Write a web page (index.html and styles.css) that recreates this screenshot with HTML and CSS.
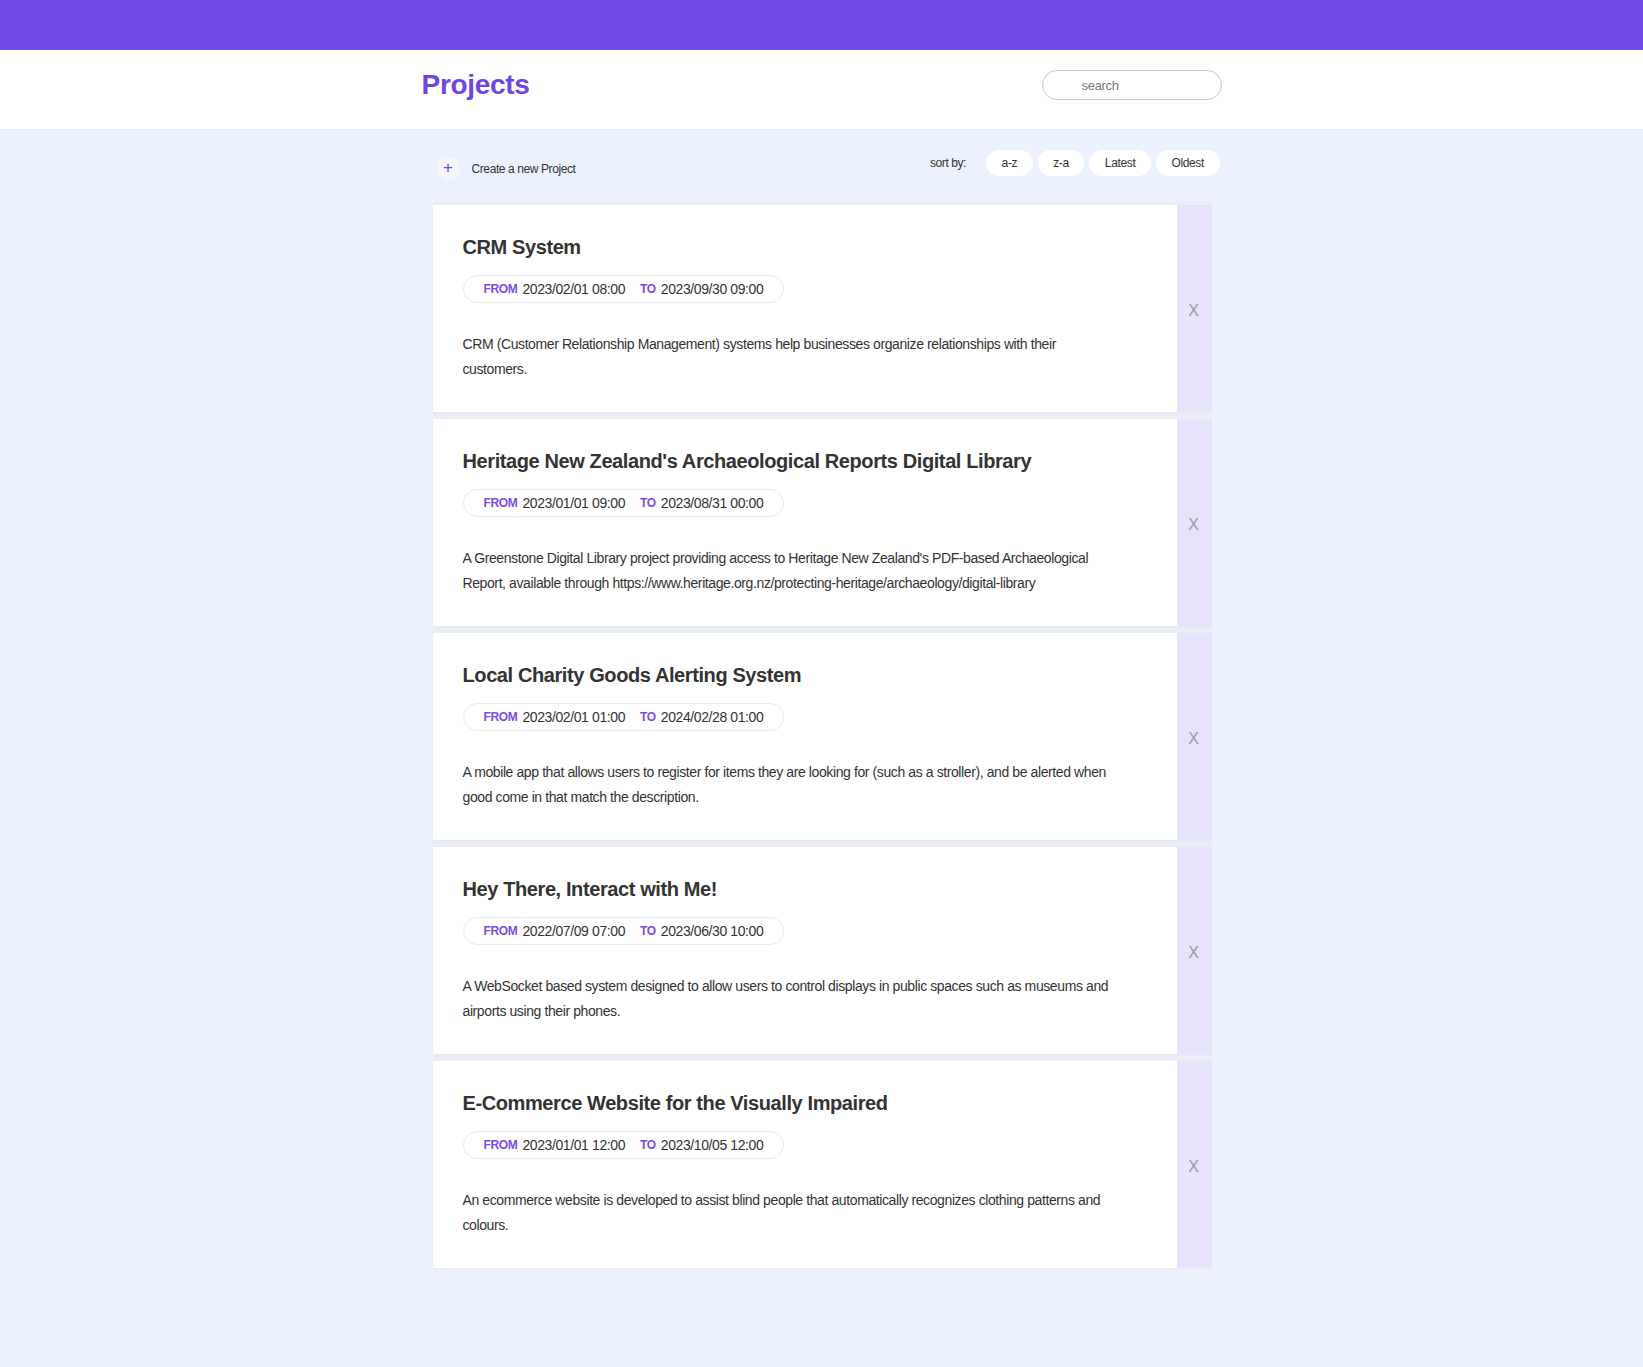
FILE: index.html
```html
<!DOCTYPE html>
<html lang="en">
<head>
<meta charset="utf-8">
<title>Projects</title>
<link rel="stylesheet" href="styles.css">
</head>
<body>
<div class="topbar"></div>
<header class="header">
  <div class="container header-inner">
    <h1 class="title">Projects</h1>
    <input class="search" type="text" placeholder="search">
  </div>
</header>
<main class="container">
  <div class="toolbar">
    <button class="create"><span class="plus">+</span><span class="create-text">Create a new Project</span></button>
    <div class="sort">
      <span class="sort-label">sort by:</span>
      <button class="sort-btn">a-z</button>
      <button class="sort-btn">z-a</button>
      <button class="sort-btn">Latest</button>
      <button class="sort-btn">Oldest</button>
    </div>
  </div>
  <ul class="list">
    <li class="card">
      <div class="card-body">
        <h2 class="card-title">CRM System</h2>
        <div class="dates"><span class="lbl">FROM</span><span class="date">2023/02/01 08:00</span><span class="lbl">TO</span><span class="date">2023/09/30 09:00</span></div>
        <p class="desc">CRM (Customer Relationship Management) systems help businesses organize relationships with their customers.</p>
      </div>
      <button class="remove">X</button>
    </li>
    <li class="card">
      <div class="card-body">
        <h2 class="card-title">Heritage New Zealand's Archaeological Reports Digital Library</h2>
        <div class="dates"><span class="lbl">FROM</span><span class="date">2023/01/01 09:00</span><span class="lbl">TO</span><span class="date">2023/08/31 00:00</span></div>
        <p class="desc">A Greenstone Digital Library project providing access to Heritage New Zealand's PDF-based Archaeological Report, available through https://www.heritage.org.nz/protecting-heritage/archaeology/digital-library</p>
      </div>
      <button class="remove">X</button>
    </li>
    <li class="card">
      <div class="card-body">
        <h2 class="card-title">Local Charity Goods Alerting System</h2>
        <div class="dates"><span class="lbl">FROM</span><span class="date">2023/02/01 01:00</span><span class="lbl">TO</span><span class="date">2024/02/28 01:00</span></div>
        <p class="desc">A mobile app that allows users to register for items they are looking for (such as a stroller), and be alerted when good come in that match the description.</p>
      </div>
      <button class="remove">X</button>
    </li>
    <li class="card">
      <div class="card-body">
        <h2 class="card-title">Hey There, Interact with Me!</h2>
        <div class="dates"><span class="lbl">FROM</span><span class="date">2022/07/09 07:00</span><span class="lbl">TO</span><span class="date">2023/06/30 10:00</span></div>
        <p class="desc">A WebSocket based system designed to allow users to control displays in public spaces such as museums and airports using their phones.</p>
      </div>
      <button class="remove">X</button>
    </li>
    <li class="card">
      <div class="card-body">
        <h2 class="card-title">E-Commerce Website for the Visually Impaired</h2>
        <div class="dates"><span class="lbl">FROM</span><span class="date">2023/01/01 12:00</span><span class="lbl">TO</span><span class="date">2023/10/05 12:00</span></div>
        <p class="desc">An ecommerce website is developed to assist blind people that automatically recognizes clothing patterns and colours.</p>
      </div>
      <button class="remove">X</button>
    </li>
  </ul>
</main>
</body>
</html>
```
FILE: styles.css
```css
* { box-sizing: border-box; }
html, body { margin: 0; padding: 0; }
body {
  background: #ebf1fd;
  font-family: "Liberation Sans", Arial, sans-serif;
  color: #333;
  min-height: 1367px;
}
.topbar { height: 50px; background: #7049e6; }
.header {
  background: #fff;
  height: 80px;
  border-bottom: 1px solid #e3e8f2;
}
.container { width: 800px; margin: 0 auto; }
.header-inner {
  height: 100%;
  display: flex;
  align-items: center;
  justify-content: space-between;
  padding-bottom: 9px;
}
.title {
  margin: 0;
  font-size: 28px;
  font-weight: bold;
  color: #6f45e4;
  letter-spacing: -0.3px;
}
.search {
  width: 180px;
  height: 30px;
  border: 1px solid #c8c8c8;
  border-radius: 15px;
  padding: 0 0 0 39px;
  font-family: inherit;
  font-size: 13px;
  color: #333;
  outline: none;
  letter-spacing: -0.3px;
}
.search::placeholder { color: #777; }
.toolbar {
  height: 71px;
  display: flex;
  justify-content: space-between;
  align-items: flex-start;
  padding: 20px 2px 0 15px;
}
.create {
  display: flex;
  align-items: center;
  margin-top: 7px;
  background: none;
  border: 0;
  padding: 0;
  font-family: inherit;
  cursor: pointer;
}
.plus {
  width: 23px;
  height: 23px;
  border-radius: 50%;
  background: #f5f6fe;
  color: #7049e6;
  font-size: 17px;
  line-height: 22px;
  text-align: center;
  margin-right: 12px;
}
.create-text { font-size: 12px; color: #333; letter-spacing: -0.4px; }
.sort { display: flex; align-items: center; gap: 5px; }
.sort-label { font-size: 12px; color: #333; margin-right: 15px; letter-spacing: -0.4px; }
.sort-btn {
  height: 26px;
  border: 0;
  border-radius: 13px;
  background: #fff;
  padding: 0 15.5px;
  font-family: inherit;
  font-size: 12px;
  color: #333;
  letter-spacing: -0.35px;
  cursor: pointer;
}
.list {
  list-style: none;
  margin: 0 10px 0 11px;
  padding: 4px 0 0;
  display: flex;
  flex-direction: column;
  gap: 7px;
  background: #e8edf6;
}
.card {
  display: flex;
  height: 207px;
  box-shadow: 0 1px 2px rgba(0,0,0,0.03);
}
.card-body {
  flex: 1;
  background: #fff;
  padding: 31px 30px 0;
}
.card-title {
  margin: 0;
  font-size: 20px;
  line-height: 23px;
  font-weight: bold;
  color: #333;
  letter-spacing: -0.4px;
}
.dates {
  display: inline-flex;
  align-items: center;
  margin-top: 16px;
  height: 28px;
  padding: 0 20px 0 20px;
  border: 1px solid #ebebef;
  border-radius: 14px;
}
.lbl {
  font-size: 12px;
  font-weight: bold;
  color: #7d4ae8;
  margin-right: 5px;
  letter-spacing: -0.35px;
}
.date {
  font-size: 14px;
  color: #333;
  letter-spacing: -0.4px;
  margin-right: 15px;
}
.date:last-child { margin-right: 0; }
.desc {
  margin: 29px 0 0;
  max-width: 652px;
  font-size: 14px;
  line-height: 24.5px;
  color: #333;
  letter-spacing: -0.4px;
}
.remove {
  width: 35px;
  background: #e8e3fd;
  border: 0;
  padding: 4px 1px 0 0;
  font-family: inherit;
  font-size: 16px;
  color: #999;
  cursor: pointer;
}
```
